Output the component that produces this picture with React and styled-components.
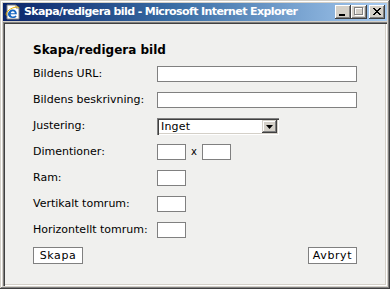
import React from "react";
import styled, { createGlobalStyle } from "styled-components";

const Global = createGlobalStyle`
  html, body { margin: 0; padding: 0; background: #d4d0c8; }
  body { width: 390px; height: 289px; overflow: hidden; }
  * { box-sizing: border-box; }
`;

const Window = styled.div`
  width: 390px;
  height: 289px;
  background: #d4d0c8;
  padding: 3px;
  display: flex;
  flex-direction: column;
  gap: 1px;
  box-shadow: inset -1px -1px #404040, inset 1px 1px #d4d0c8,
    inset -2px -2px #808080, inset 2px 2px #ffffff;
`;

const TitleBar = styled.div`
  height: 18px;
  flex: none;
  display: flex;
  align-items: center;
  padding: 0 2px 0 2px;
  background: linear-gradient(to right, #0a246a 0%, #3a6ea5 45%, #a6caf0 100%);
`;

const TitleText = styled.span`
  flex: 1;
  margin-left: 3px;
  color: #fff;
  font-family: "DejaVu Sans", Verdana, sans-serif;
  font-weight: bold;
  font-size: 11px;
  letter-spacing: -0.6px;
  white-space: nowrap;
  line-height: 18px;
`;

const CapButton = styled.button`
  width: 16px;
  height: 14px;
  padding: 0;
  margin: 0 0 0 ${(p) => (p.$gap ? 2 : 0)}px;
  border: none;
  background: #d4d0c8;
  box-shadow: inset -1px -1px #404040, inset 1px 1px #ffffff,
    inset -2px -2px #808080, inset 2px 2px #d4d0c8;
  display: flex;
  align-items: center;
  justify-content: center;
`;

const Client = styled.div`
  flex: 1;
  background: #f0f0ee;
  padding: 2px;
  box-shadow: inset 1px 1px #808080, inset 2px 2px #404040,
    inset -1px -1px #ffffff, inset -2px -2px #d4d0c8;
  font-family: "DejaVu Sans", Verdana, sans-serif;
  font-size: 11px;
  color: #000;
`;

const Form = styled.div`
  padding: 18px 28px 0 28px;
  display: flex;
  flex-direction: column;
`;

const Heading = styled.h1`
  margin: 0;
  font-size: 12px;
  font-weight: bold;
  line-height: 16px;
  height: 16px;
`;

const Grid = styled.div`
  margin-top: 8px;
  display: grid;
  grid-template-columns: 124px 200px;
  grid-auto-rows: 16px;
  row-gap: 10px;
  align-items: center;
`;

const Label = styled.label`
  white-space: nowrap;
  line-height: 16px;
`;

const TextInput = styled.input`
  display: block;
  width: ${(p) => p.$w || 200}px;
  height: 16px;
  margin: 0;
  padding: 0 2px;
  border: 1px solid #808080;
  background: #fff;
  font: inherit;
  outline: none;
`;

const Pair = styled.div`
  display: flex;
  align-items: center;
  gap: 5px;
`;

const Times = styled.span`
  font-size: 10px;
  line-height: 16px;
`;

const Select = styled.div`
  width: 122px;
  height: 17px;
  margin-top: 1px;
  background: #fff;
  display: flex;
  align-items: center;
  padding: 2px;
  box-shadow: inset 1px 1px #808080, inset 2px 2px #404040,
    inset -1px -1px #ffffff, inset -2px -2px #d4d0c8;
`;

const SelectValue = styled.span`
  flex: 1;
  padding-left: 2px;
  line-height: 13px;
  letter-spacing: 0.2px;
`;

const SelectArrow = styled.span`
  width: 15px;
  height: 13px;
  background: #d4d0c8;
  box-shadow: inset -1px -1px #404040, inset 1px 1px #d4d0c8,
    inset -2px -2px #808080, inset 2px 2px #ffffff;
  display: flex;
  align-items: center;
  justify-content: center;
`;

const Buttons = styled.div`
  margin-top: 9px;
  display: flex;
  justify-content: space-between;
`;

const Button = styled.button`
  width: ${(p) => p.$w}px;
  height: 17px;
  margin: 0;
  padding: 0;
  background: #fff;
  border: 1px solid #808080;
  font: inherit;
  font-size: 11px;
  letter-spacing: 0.6px;
  line-height: 15px;
  color: #000;
`;

const IeIcon = () => (
  <svg width="16" height="16" viewBox="0 0 16 16">
    <path d="M2 1h9l3 3v11H2z" fill="#fff" stroke="#808080" strokeWidth="1" />
    <path d="M11 1v3h3" fill="none" stroke="#808080" strokeWidth="1" />
    <path
      d="M3 10.5c0-3 2.2-5 4.8-5 2.4 0 4 1.7 4 4.2v.6H5.6c.2 1.5 1.2 2.3 2.6 2.3 1 0 1.8-.4 2.4-1.1l1 .9c-.9 1-2.1 1.5-3.5 1.5C5 13.9 3 12.5 3 10.5zm2.7-1.2h4.1c-.1-1.3-.9-2.1-2-2.1s-1.9.8-2.1 2.1z"
      fill="#1565c0"
    />
    <path d="M1.5 11.5C0 9 4 5 9 3.5c3-.9 5-.6 5.2.4" fill="none" stroke="#f0b400" strokeWidth="1" />
  </svg>
);

export default function App() {
  return (
    <>
      <Global />
      <Window>
        <TitleBar>
          <IeIcon />
          <TitleText>Skapa/redigera bild - Microsoft Internet Explorer</TitleText>
          <CapButton aria-label="Minimera">
            <svg width="16" height="14" viewBox="0 0 16 14">
              <rect x="4" y="9" width="6" height="2" fill="#000" />
            </svg>
          </CapButton>
          <CapButton aria-label="Maximera">
            <svg width="16" height="14" viewBox="0 0 16 14">
              <rect x="4.5" y="3.5" width="8" height="7" fill="none" stroke="#fff" />
              <rect x="3.5" y="2.5" width="8" height="7" fill="none" stroke="#808080" />
              <rect x="3" y="2" width="9" height="1" fill="#808080" />
            </svg>
          </CapButton>
          <CapButton $gap aria-label="Stäng">
            <svg width="16" height="14" viewBox="0 0 16 14">
              <path d="M4 3l7 7M5 3l7 7M11 3l-7 7M12 3l-7 7" stroke="#000" strokeWidth="1" />
            </svg>
          </CapButton>
        </TitleBar>
        <Client>
          <Form>
            <Heading>Skapa/redigera bild</Heading>
            <Grid>
              <Label>Bildens URL:</Label>
              <TextInput />
              <Label>Bildens beskrivning:</Label>
              <TextInput />
              <Label>Justering:</Label>
              <Select>
                <SelectValue>Inget</SelectValue>
                <SelectArrow>
                  <svg width="7" height="4" viewBox="0 0 7 4">
                    <path d="M0 0h7L3.5 4z" fill="#000" />
                  </svg>
                </SelectArrow>
              </Select>
              <Label>Dimentioner:</Label>
              <Pair>
                <TextInput $w={29} />
                <Times>x</Times>
                <TextInput $w={29} />
              </Pair>
              <Label>Ram:</Label>
              <TextInput $w={29} />
              <Label>Vertikalt tomrum:</Label>
              <TextInput $w={29} />
              <Label>Horizontellt tomrum:</Label>
              <TextInput $w={29} />
            </Grid>
            <Buttons>
              <Button $w={50}>Skapa</Button>
              <Button $w={49}>Avbryt</Button>
            </Buttons>
          </Form>
        </Client>
      </Window>
    </>
  );
}
